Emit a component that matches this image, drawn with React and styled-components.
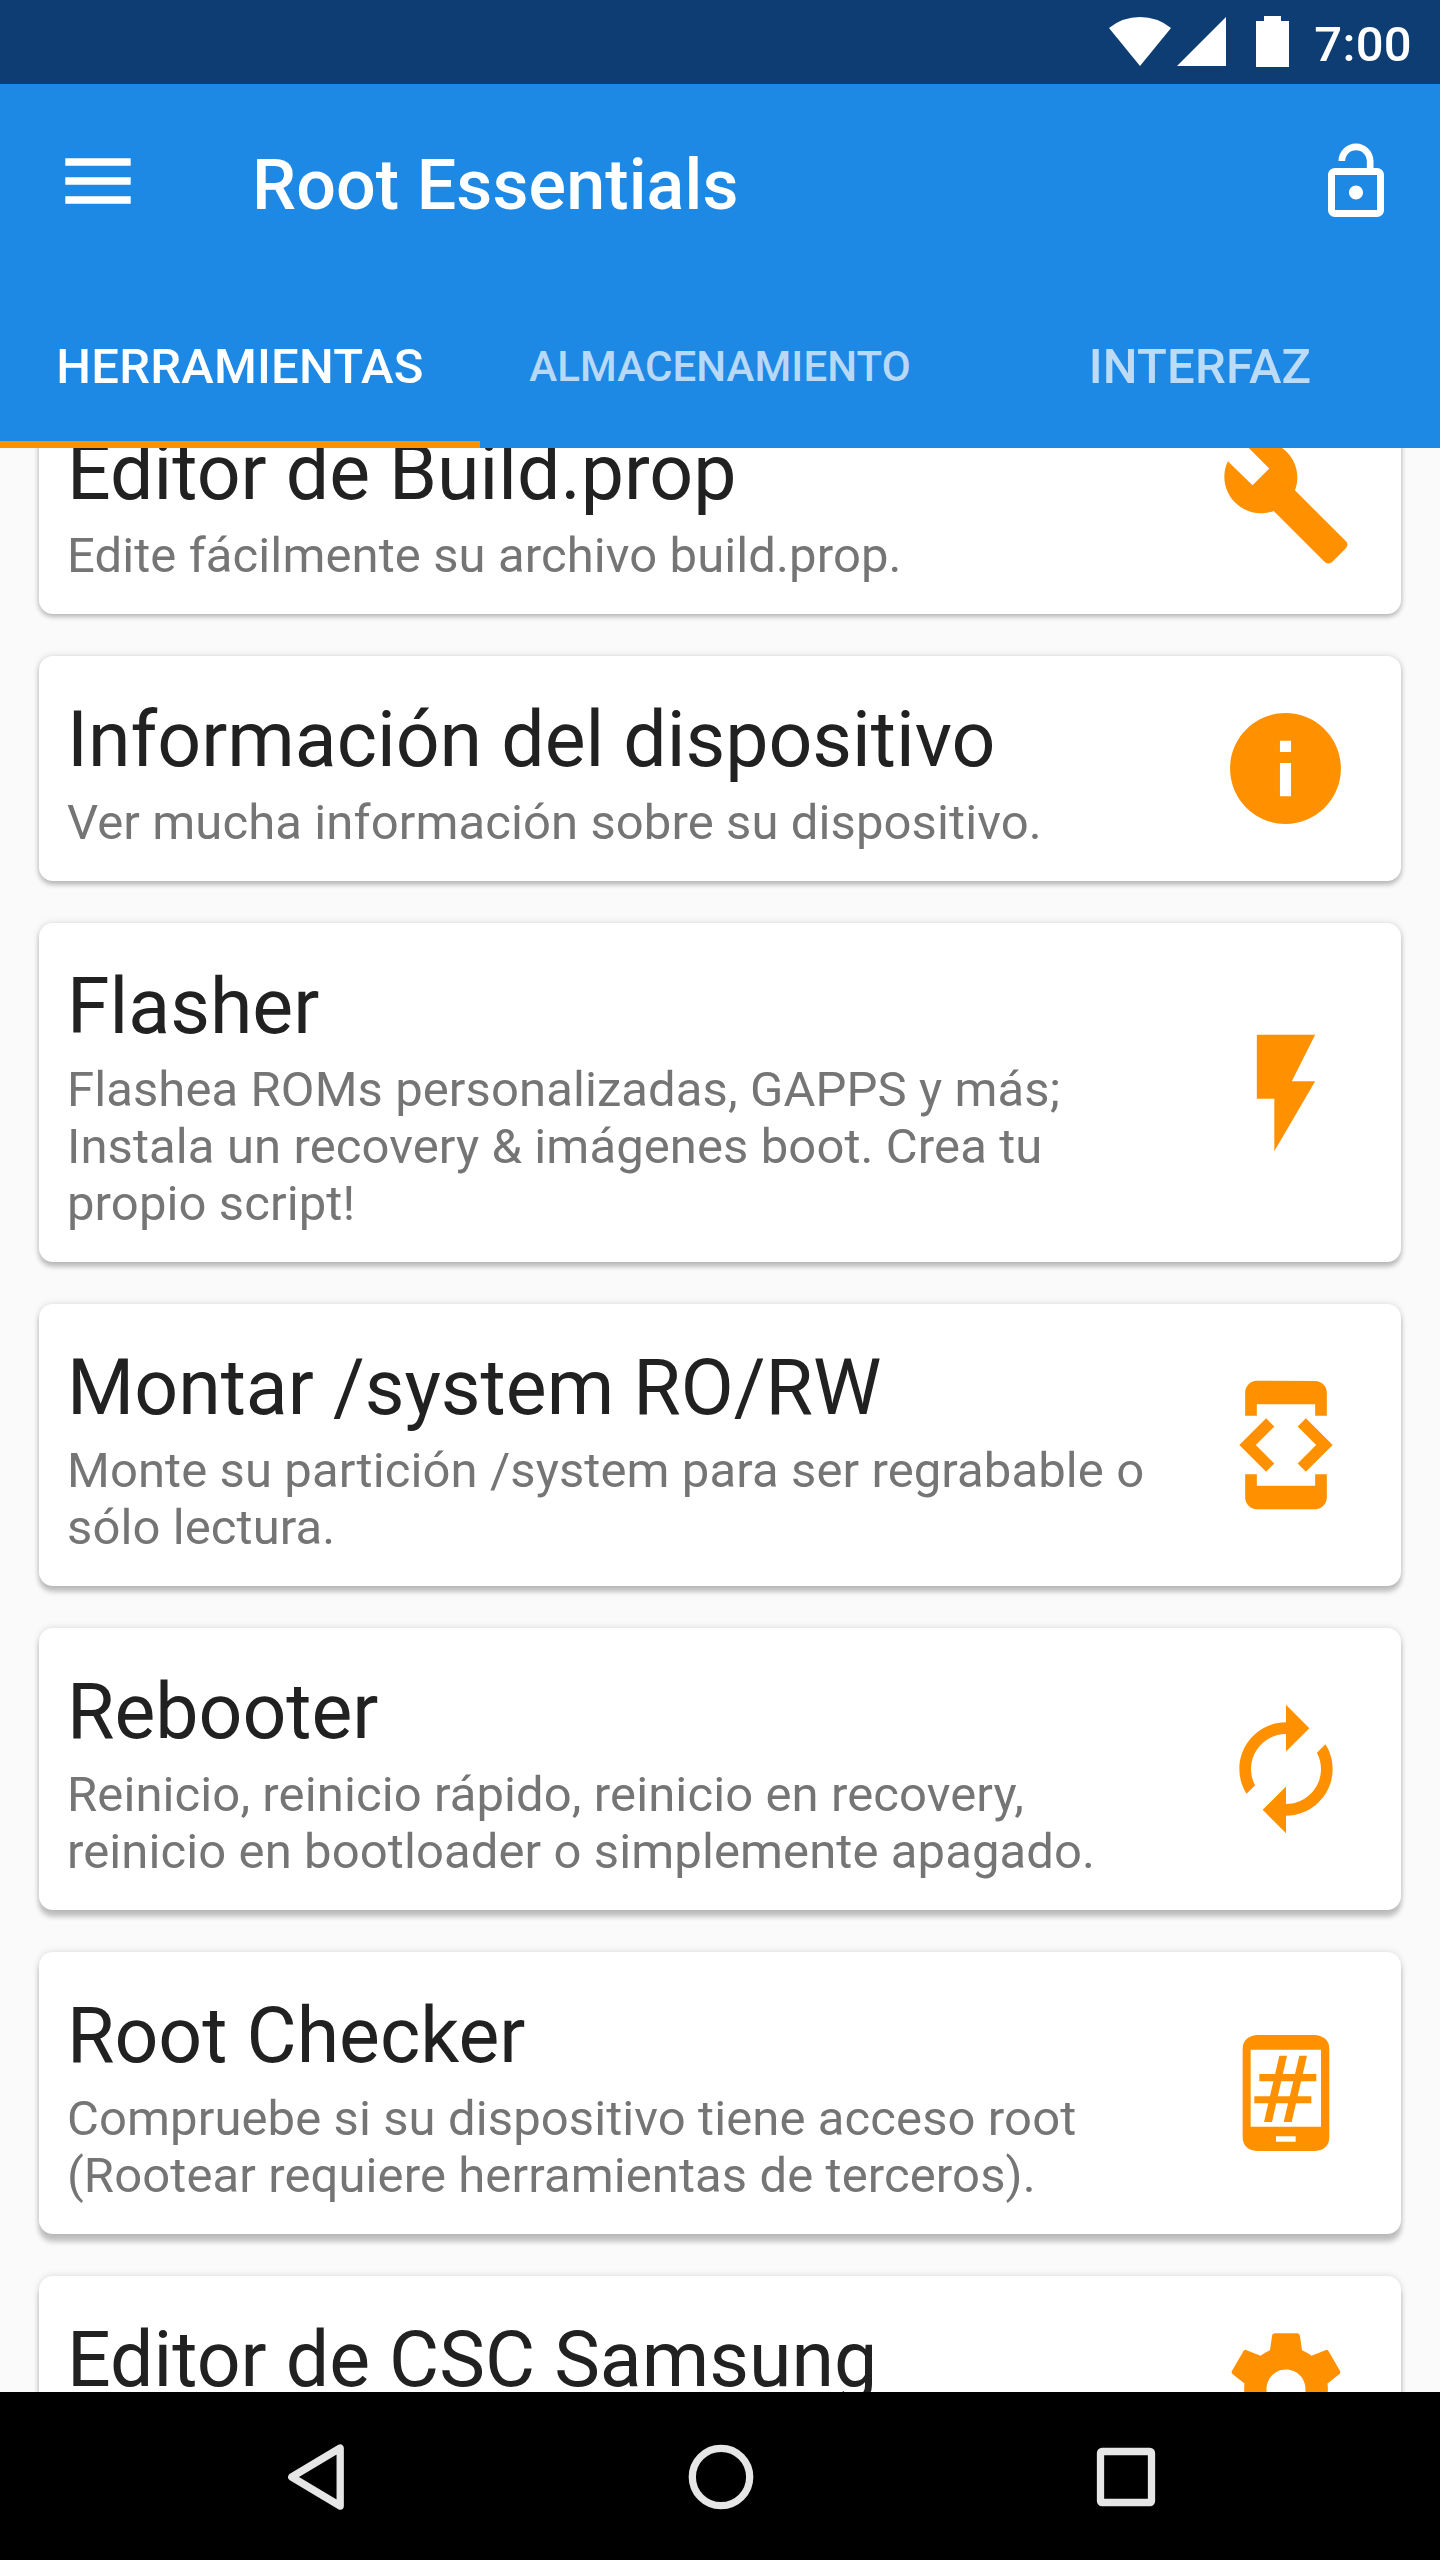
import React from "react";
import styled, { createGlobalStyle } from "styled-components";

const GlobalStyle = createGlobalStyle`
  *, *::before, *::after { box-sizing: border-box; }
  body {
    margin: 0;
    background: #fafafa;
    font-family: Roboto, "Noto Sans", sans-serif;
  }
  svg { display: block; flex: none; }
`;

const Screen = styled.div`
  display: flex;
  flex-direction: column;
  width: 1440px;
  height: 2560px;
  overflow: hidden;
  background: #fafafa;
`;

const StatusBar = styled.div`
  flex: none;
  display: flex;
  align-items: flex-start;
  justify-content: flex-end;
  height: 84px;
  padding: 16px 28px 0 0;
  background: #0e3d73;
  color: #fff;
`;

const StatusIcon = styled.svg`
  fill: #fff;
  margin: ${(p) => p.$top || 0}px ${(p) => p.$gap}px 0 0;
`;

const Clock = styled.span`
  font-size: 49px;
  line-height: 57px;
  font-weight: 500;
  letter-spacing: 0.3px;
`;

const Toolbar = styled.header`
  flex: none;
  display: flex;
  align-items: center;
  height: 196px;
  padding: 0 42px 0 65px;
  background: #1e88e5;
  color: #fff;
  svg { fill: #fff; }
`;

const MenuIcon = styled.svg`
  margin-bottom: 3px;
`;

const AppTitle = styled.h1`
  flex: 1;
  margin: 0 0 0 121px;
  padding-top: 6px;
  font-size: 70px;
  line-height: 82px;
  font-weight: 500;
  letter-spacing: 0.1px;
`;

const Tabs = styled.nav`
  flex: none;
  display: grid;
  grid-template-columns: repeat(3, 480px);
  height: 168px;
  background: #1e88e5;
`;

const Tab = styled.div`
  display: flex;
  align-items: center;
  justify-content: center;
  padding-top: ${(p) => (p.$active ? 12 : 5)}px;
  border-bottom: ${(p) => (p.$active ? "7px solid #ff9100" : "0")};
  color: ${(p) => (p.$active ? "#fff" : "rgba(255, 255, 255, 0.7)")};
  font-size: ${(p) => (p.$compact ? 42 : 49)}px;
  font-weight: 500;
  line-height: 58px;
  letter-spacing: ${(p) => (p.$compact ? 0.12 : 0.2)}px;
`;

const Viewport = styled.main`
  flex: 1;
  min-height: 0;
  overflow: hidden;
`;

const CardList = styled.div`
  display: flex;
  flex-direction: column;
  gap: 42px;
  margin-top: -59px;
  padding: 0 39px;
`;

const Card = styled.section`
  display: flex;
  align-items: center;
  min-height: 225px;
  padding: 0 28px;
  border-radius: 14px;
  background: #fff;
  box-shadow:
    0 ${(p) => p.$drop}px 5px rgba(0, 0, 0, 0.21),
    0 0 7px rgba(0, 0, 0, 0.14);
`;

const CardText = styled.div`
  flex: 1;
  align-self: stretch;
  padding: 39px 28px 30px 0;
`;

const CardTitle = styled.h2`
  margin: 0 0 9px;
  color: #212121;
  font-size: 77px;
  line-height: 90px;
  font-weight: 400;
  white-space: nowrap;
`;

const CardDescription = styled.p`
  margin: 0;
  color: #757575;
  font-size: 49px;
  line-height: 57px;
  letter-spacing: 0.1px;
`;

const IconSlot = styled.div`
  flex: none;
  display: flex;
  justify-content: center;
  width: 175px;
  svg { fill: #ff9100; }
`;

const NavigationBar = styled.footer`
  flex: none;
  display: flex;
  align-items: center;
  justify-content: center;
  height: 168px;
  padding-left: 1px;
  background: #000;
`;

const NavButton = styled.div`
  display: flex;
  justify-content: center;
  width: 405px;
  padding-top: 1px;
  svg {
    fill: none;
    stroke: #e6e6e6;
    stroke-width: 7.3;
    stroke-linejoin: round;
  }
`;

const MaterialIcon = ({ size, d }) => (
  <svg width={size} height={size} viewBox="0 0 24 24">
    <path d={d} />
  </svg>
);

const PATHS = {
  lock:
    "M12 17c1.1 0 2-.9 2-2s-.9-2-2-2-2 .9-2 2 .9 2 2 2zm6-9h-1V6c0-2.76-2.24-5-5-5S7 3.24 7 6h1.9c0-1.71 1.39-3.1 3.1-3.1 1.71 0 3.1 1.39 3.1 3.1v2H6c-1.1 0-2 .9-2 2v10c0 1.1.9 2 2 2h12c1.1 0 2-.9 2-2V10c0-1.1-.9-2-2-2zm0 12H6V10h12v10z",
  wrench:
    "M22.7 19l-9.1-9.1c.9-2.3.4-5-1.5-6.9-2-2-5-2.4-7.4-1.3L9 6 6 9 1.6 4.7C.4 7.1.9 10.1 2.9 12.1c1.9 1.9 4.6 2.4 6.9 1.5l9.1 9.1c.4.4 1 .4 1.4 0l2.3-2.3c.5-.4.5-1.1.1-1.4z",
  info: "M12 2C6.48 2 2 6.48 2 12s4.48 10 10 10 10-4.48 10-10S17.52 2 12 2zm1 15h-2v-6h2v6zm0-8h-2V7h2v2z",
  bolt: "M7 2v11h3v9l7-12h-4l4-8z",
  developer:
    "M7 5h10v2h2V3c0-1.1-.9-1.99-2-1.99L7 1c-1.1 0-2 .9-2 2v4h2V5zm8.41 11.59L20 12l-4.59-4.59L14 8.83 17.17 12 14 15.17l1.41 1.42zM10 15.17L6.83 12 10 8.83 8.59 7.41 4 12l4.59 4.59L10 15.17zM17 19H7v-2H5v4c0 1.1.9 2 2 2h10c1.1 0 2-.9 2-2v-4h-2v2z",
  renew:
    "M12 6v3l4-4-4-4v3c-4.42 0-8 3.58-8 8 0 1.57.46 3.03 1.24 4.26L6.7 14.8c-.45-.83-.7-1.79-.7-2.8 0-3.31 2.69-6 6-6zm6.76 1.74L17.3 9.2c.44.84.7 1.79.7 2.8 0 3.31-2.69 6-6 6v-3l-4 4 4 4v-3c4.42 0 8-3.58 8-8 0-1.57-.46-3.03-1.24-4.26z",
  gear:
    "M19.43 12.98c.04-.32.07-.64.07-.98s-.03-.66-.07-.98l2.11-1.65c.19-.15.24-.42.12-.64l-2-3.46c-.12-.22-.39-.3-.61-.22l-2.49 1c-.52-.4-1.08-.73-1.69-.98l-.38-2.65C14.46 2.18 14.25 2 14 2h-4c-.25 0-.46.18-.49.42l-.38 2.65c-.61.25-1.17.59-1.69.98l-2.49-1c-.23-.09-.49 0-.61.22l-2 3.46c-.13.22-.07.49.12.64l2.11 1.65c-.04.32-.07.65-.07.98s.03.66.07.98l-2.11 1.65c-.19.15-.24.42-.12.64l2 3.46c.12.22.39.3.61.22l2.49-1c.52.4 1.08.73 1.69.98l.38 2.65c.03.24.24.42.49.42h4c.25 0 .46-.18.49-.42l.38-2.65c.61-.25 1.17-.59 1.69-.98l2.49 1c.23.09.49 0 .61-.22l2-3.46c.12-.22.07-.49-.12-.64l-2.11-1.65zM12 15.5c-1.93 0-3.5-1.57-3.5-3.5s1.57-3.5 3.5-3.5 3.5 1.57 3.5 3.5-1.57 3.5-3.5 3.5z",
};

const RootPhoneIcon = () => (
  <svg width="140" height="140" viewBox="-13 39 420 420">
    <path
      fillRule="evenodd"
      d="M110 75H284Q327 79 327 118V380Q327 419 284 423H110Q67 419 67 380V118Q67 79 110 75ZM91 119V350H302V119ZM167 379V395H226V379Z"
    />
    <path d="M177 137H200L155 336H131ZM237 137H260L214 336H190ZM117 192H288V214H117ZM102 259H273V280H102Z" />
  </svg>
);

const tools = [
  {
    title: "Editor de Build.prop",
    text: "Edite fácilmente su archivo build.prop.",
    icon: <MaterialIcon size={134} d={PATHS.wrench} />,
    drop: 3,
  },
  {
    title: "Información del dispositivo",
    text: "Ver mucha información sobre su dispositivo.",
    icon: <MaterialIcon size={133} d={PATHS.info} />,
    drop: 3.5,
  },
  {
    title: "Flasher",
    text: "Flashea ROMs personalizadas, GAPPS y más; Instala un recovery & imágenes boot. Crea tu propio script!",
    icon: <MaterialIcon size={140} d={PATHS.bolt} />,
    drop: 4.5,
  },
  {
    title: "Montar /system RO/RW",
    text: "Monte su partición /system para ser regrabable o sólo lectura.",
    icon: <MaterialIcon size={140} d={PATHS.developer} />,
    drop: 5.5,
  },
  {
    title: "Rebooter",
    text: "Reinicio, reinicio rápido, reinicio en recovery, reinicio en bootloader o simplemente apagado.",
    icon: <MaterialIcon size={140} d={PATHS.renew} />,
    drop: 6.5,
  },
  {
    title: "Root Checker",
    text: "Compruebe si su dispositivo tiene acceso root (Rootear requiere herramientas de terceros).",
    icon: <RootPhoneIcon />,
    drop: 7.5,
  },
  {
    title: "Editor de CSC Samsung",
    icon: <MaterialIcon size={134} d={PATHS.gear} />,
    drop: 8,
  },
];

export default function App() {
  return (
    <>
      <GlobalStyle />
      <Screen>
        <StatusBar>
          <StatusIcon width="62" height="49" viewBox="0 0 62 49" $top={1} $gap={6}>
            <path d="M31 49L0 11Q13.500 0 31 0T62 11Z" />
          </StatusIcon>
          <StatusIcon width="49" height="49" viewBox="0 0 49 49" $top={1} $gap={30}>
            <path d="M49 0V49H0Z" />
          </StatusIcon>
          <StatusIcon width="33" height="51" viewBox="0 0 33 51" $gap={25}>
            <path d="M8 0H25V5H33V51H0V5H8Z" />
          </StatusIcon>
          <Clock>7:00</Clock>
        </StatusBar>
        <Toolbar>
          <MenuIcon width="66" height="46" viewBox="0 0 66 46">
            <path d="M.3.2H65.700V7.800H.3ZM.3 19.200H65.700V26.800H.3ZM.3 38.200H65.700V45.800H.3Z" />
          </MenuIcon>
          <AppTitle>Root Essentials</AppTitle>
          <MaterialIcon size={84} d={PATHS.lock} />
        </Toolbar>
        <Tabs>
          <Tab $active>HERRAMIENTAS</Tab>
          <Tab $compact>ALMACENAMIENTO</Tab>
          <Tab>INTERFAZ</Tab>
        </Tabs>
        <Viewport>
          <CardList>
            {tools.map((tool) => (
              <Card key={tool.title} $drop={tool.drop}>
                <CardText>
                  <CardTitle>{tool.title}</CardTitle>
                  {tool.text && <CardDescription>{tool.text}</CardDescription>}
                </CardText>
                <IconSlot>{tool.icon}</IconSlot>
              </Card>
            ))}
          </CardList>
        </Viewport>
        <NavigationBar>
          <NavButton>
            <svg width="66" height="66" viewBox="0 0 66 66">
              <path d="M57.200 4V62L8.700 33Z" />
            </svg>
          </NavButton>
          <NavButton>
            <svg width="66" height="66" viewBox="0 0 66 66">
              <circle cx="33" cy="33" r="28.700" />
            </svg>
          </NavButton>
          <NavButton>
            <svg width="66" height="66" viewBox="0 0 66 66">
              <rect x="7.500" y="7.500" width="51" height="51" rx="1.500" />
            </svg>
          </NavButton>
        </NavigationBar>
      </Screen>
    </>
  );
}
